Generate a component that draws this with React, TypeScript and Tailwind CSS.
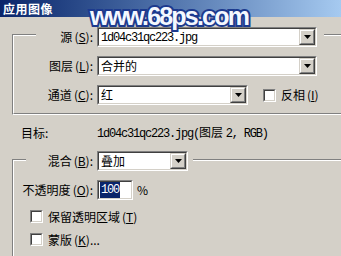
import React from 'react';

const cjk = "font-['Noto_Sans_CJK_SC',sans-serif]";
const mono = "font-['Liberation_Mono',monospace] tracking-[-1.2px]";

function Sunken({ className = '', innerClassName = '', children }: { className?: string; innerClassName?: string; children?: React.ReactNode }) {
  return (
    <div className={`border border-t-[#808080] border-l-[#808080] border-r-white border-b-white ${className}`}>
      <div className={`h-full w-full border border-t-[#404040] border-l-[#404040] border-r-[#d4d0c8] border-b-[#d4d0c8] bg-white ${innerClassName}`}>
        {children}
      </div>
    </div>
  );
}

function DropButton() {
  return (
    <div className="ml-auto h-[16px] w-[16px] shrink-0 border border-t-[#d4d0c8] border-l-[#d4d0c8] border-r-[#404040] border-b-[#404040]">
      <div className="flex h-full w-full items-center justify-center border border-t-white border-l-white border-r-[#808080] border-b-[#808080] bg-[#d4d0c8]">
        <svg width="7" height="4" viewBox="0 0 7 4"><polygon points="0,0 7,0 3.5,4" fill="#000" /></svg>
      </div>
    </div>
  );
}

function Combo({ className, children }: { className: string; children: React.ReactNode }) {
  return (
    <Sunken className={`h-[20px] ${className}`} innerClassName="flex items-center">
      <span className="pl-[2px] text-[12px] leading-none text-black whitespace-nowrap">{children}</span>
      <DropButton />
    </Sunken>
  );
}

function CheckBox() {
  return <Sunken className="h-[13px] w-[13px] shrink-0" />;
}

function Key({ children }: { children: React.ReactNode }) {
  return <span className="ml-[2px]">(<u>{children}</u>):</span>;
}

export default function App() {
  return (
    <div className={`relative h-[256px] w-[341px] overflow-hidden bg-[#d4d0c8] text-[12px] leading-none text-black ${cjk}`}>
      {/* title bar */}
      <div className="flex h-[17px] items-center bg-gradient-to-r from-[#0a246a] to-[#a6caf0] pl-[3px]">
        <span className="text-[12px] font-bold tracking-[0.5px] text-white">应用图像</span>
      </div>

      {/* group: source */}
      <div className="ml-[12px] mt-[17px] w-[340px] border-t border-l border-b border-t-[#808080] border-l-[#808080] border-b-white">
        <div className="border-t border-l border-b border-t-white border-l-white border-b-[#808080] pb-[8px]">
          <div className="-mt-[9px] ml-[22px] flex h-[20px] w-[288px] items-center bg-[#d4d0c8]">
            <div className="flex w-[57px] justify-end">源<Key>S</Key></div>
            <Combo className="ml-[4px] w-[220px]"><span className={mono}>1d04c31qc223.jpg</span></Combo>
          </div>
          <div className="mt-[9px] flex h-[20px] items-center">
            <div className="flex w-[79px] justify-end">图层<Key>L</Key></div>
            <Combo className="ml-[4px] w-[220px]">合并的</Combo>
          </div>
          <div className="mt-[9px] flex h-[20px] items-center">
            <div className="flex w-[79px] justify-end">通道<Key>C</Key></div>
            <Combo className="ml-[4px] w-[151px]">红</Combo>
            <div className="ml-[15px]"><CheckBox /></div>
            <span className="ml-[5px]">反相<span className="ml-[2px]">(<u>I</u>)</span></span>
          </div>
        </div>
      </div>

      {/* target */}
      <div className="ml-[21px] mt-[12px] flex h-[12px] items-center">
        <span className="w-[76px]">目标:</span>
        <span className="whitespace-nowrap"><span className={mono}>1d04c31qc223.jpg(</span>图层 <span className={mono}>2, RGB)</span></span>
      </div>

      {/* group: blending */}
      <div className="ml-[12px] mt-[20px] h-[200px] w-[340px] border-t border-l border-t-[#808080] border-l-[#808080]">
        <div className="h-full border-t border-l border-t-white border-l-white">
          <div className="-mt-[10px] ml-[12px] flex h-[20px] w-[167px] items-center bg-[#d4d0c8]">
            <div className="flex w-[67px] justify-end">混合<Key>B</Key></div>
            <Combo className="ml-[4px] w-[91px]">叠加</Combo>
          </div>
          <div className="mt-[9px] flex h-[20px] items-center">
            <div className="flex w-[79px] justify-end whitespace-nowrap">不透明度<Key>O</Key></div>
            <Sunken className="ml-[4px] h-[20px] w-[36px]" innerClassName="flex items-center">
              <span className={`ml-[1px] bg-[#0a246a] px-[1px] py-[2px] text-white ${mono}`}>100</span>
            </Sunken>
            <span className="ml-[4px]">%</span>
          </div>
          <div className="ml-[16px] mt-[10px] flex h-[13px] items-center">
            <CheckBox />
            <span className="ml-[5px]">保留透明区域<span className="ml-[2px]">(<u>T</u>)</span></span>
          </div>
          <div className="ml-[16px] mt-[10px] flex h-[13px] items-center">
            <CheckBox />
            <span className="ml-[5px]">蒙版<span className="ml-[2px]">(<u>K</u>)...</span></span>
          </div>
        </div>
      </div>

      {/* watermark */}
      <div className="absolute left-[90px] top-[4px] font-['Liberation_Sans',sans-serif] text-[25px] font-bold leading-none tracking-[-1.8px] text-[#f4f8ff] [-webkit-text-stroke:4px_#1c3a8e] [paint-order:stroke_fill]">
        www.68ps.com
      </div>
    </div>
  );
}
